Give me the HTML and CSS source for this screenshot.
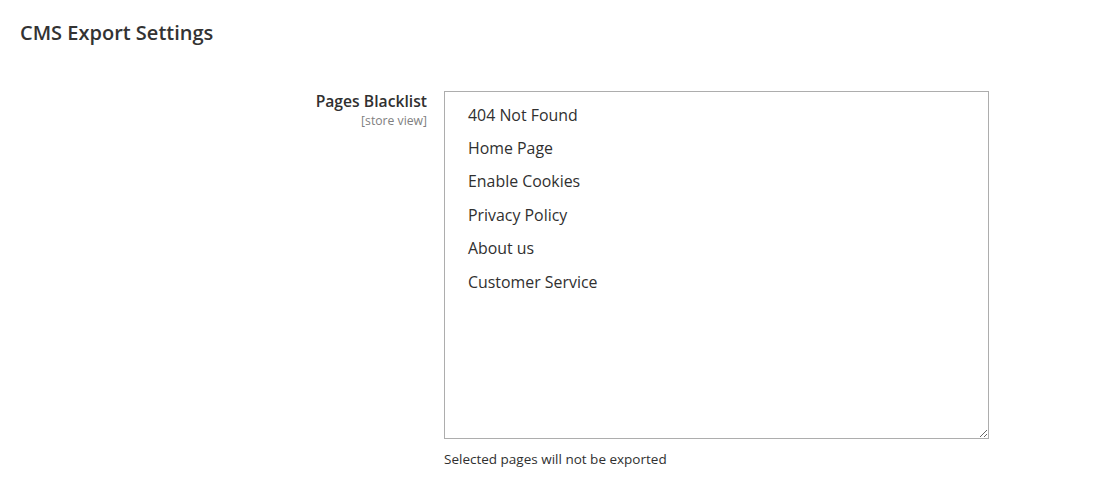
FILE: index.html
```html
<!DOCTYPE html>
<html>
<head>
<meta charset="utf-8">
<link rel="stylesheet" href="styles.css">
</head>
<body>
<div class="page">
  <h2 class="section-title">CMS Export Settings</h2>
  <div class="field-row">
    <div class="label-col">
      <div class="label">Pages Blacklist</div>
      <div class="scope">[store view]</div>
    </div>
    <div class="control-col">
      <div class="multiselect">
        <div class="option">404 Not Found</div>
        <div class="option">Home Page</div>
        <div class="option">Enable Cookies</div>
        <div class="option">Privacy Policy</div>
        <div class="option">About us</div>
        <div class="option">Customer Service</div>
      </div>
      <div class="note">Selected pages will not be exported</div>
    </div>
  </div>
</div>
</body>
</html>
```

FILE: styles.css
```css
html, body {
  margin: 0;
  padding: 0;
  background: #fff;
}
body {
  font-family: "Open Sans", "Liberation Sans", sans-serif;
  color: #303030;
}
.page {
  padding: 20px 20px 0 20px;
}
.section-title {
  margin: 0;
  font-size: 20px;
  font-weight: 600;
  line-height: 26px;
  color: #333;
}
.field-row {
  display: flex;
  align-items: flex-start;
  margin-top: 45px;
}
.label-col {
  width: 407px;
  text-align: right;
  padding-right: 17px;
}
.label {
  font-size: 15.7px;
  font-weight: 600;
  line-height: 21px;
  color: #303030;
}
.scope {
  font-size: 12.2px;
  line-height: 17px;
  color: #808080;
}
.multiselect {
  box-sizing: border-box;
  width: 545px;
  height: 348px;
  border: 1px solid #adadad;
  padding: 6px 0 0 0;
  overflow: auto;
  resize: both;
}
.option {
  font-size: 15.9px;
  line-height: 22px;
  padding: 5.7px 23px;
  color: #303030;
}
.note {
  margin-top: 12px;
  font-size: 13.5px;
  line-height: 16px;
  color: #303030;
}
```
